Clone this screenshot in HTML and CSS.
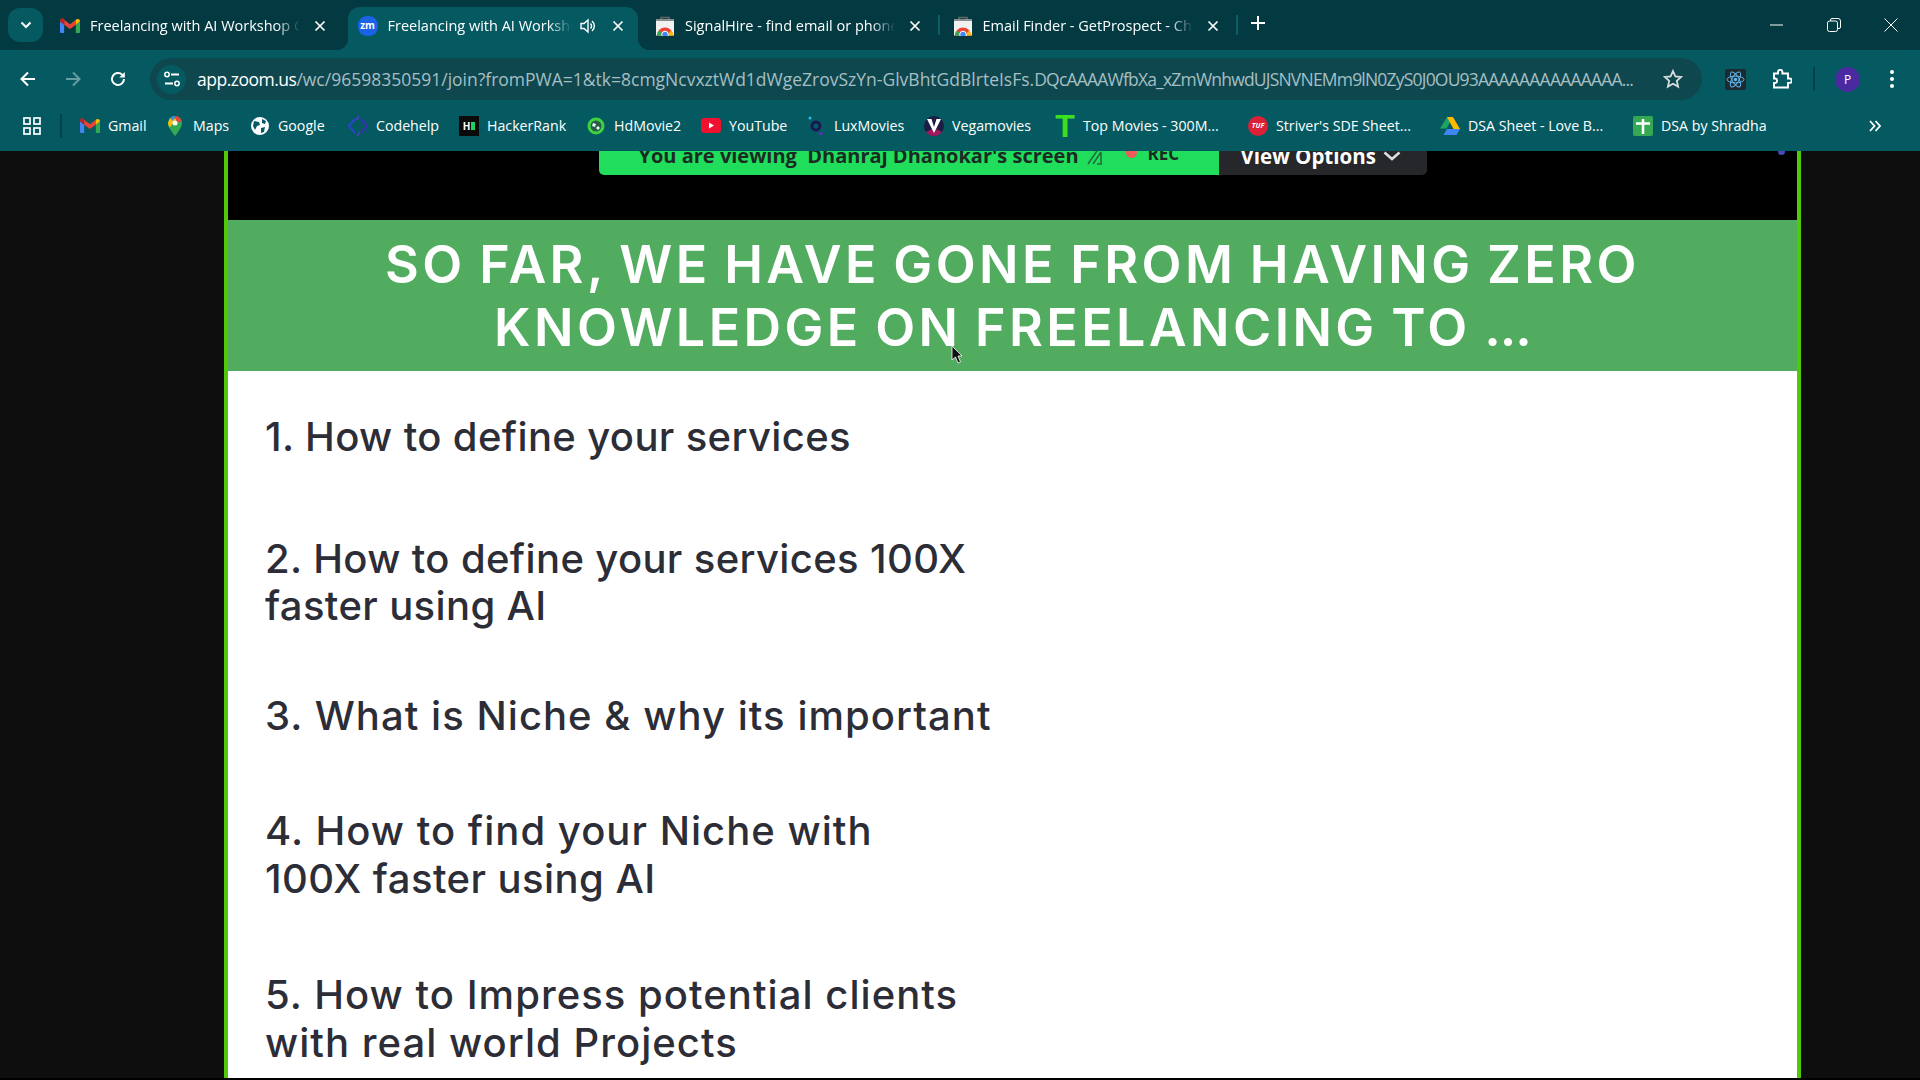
FILE: index.html
```html
<!DOCTYPE html>
<html lang="en">
<head>
    <meta charset="UTF-8">
    <title>Freelancing with AI Workshop</title>
    <link rel="stylesheet" href="styles.css">
</head>
<body>
<svg class="defs" width="0" height="0">
    <symbol id="gmail" viewBox="0 0 24 18">
        <path d="M1 18h4V8L0 4v12.500a1.500 1.500 0 0 0 1 1.500z" fill="#4285f4"/>
        <path d="M19 18h4a1.500 1.500 0 0 0 1-1.500V4l-5 4z" fill="#34a853"/>
        <path d="M5 8V2l7 5.500L19 2v6l-7 5.300z" fill="#ea4335"/>
        <path d="M0 4V3c0-2.500 3-3.500 5-2v7z" fill="#c5221f"/>
        <path d="M19 2c2-1.500 5-.5 5 2v0l-5 4z" fill="#fbbc04"/>
    </symbol>
    <symbol id="store" viewBox="0 0 20 20">
        <path d="M6 4V1.500h8V4" fill="none" stroke="#666" stroke-width="1.500"/>
        <rect x="1" y="3.500" width="18" height="16" fill="#f1f1f1"/>
        <rect x="1" y="3.500" width="18" height="1.500" fill="#8a8a8a"/>
        <path d="M2 19.500a8 8 0 0 1 16 0z" fill="#ea4335"/>
        <path d="M2 19.500a8 8 0 0 1 2.400-5.600l3.600 5.600z" fill="#34a853"/>
        <path d="M18 19.500a8 8 0 0 0-2-5.300l-4 5.300z" fill="#fbbc04"/>
        <circle cx="10" cy="18.500" r="3.300" fill="#4285f4" stroke="#fff"/>
    </symbol>
    <symbol id="close" viewBox="0 0 12 12">
        <path d="M1.500 1.500l9 9m0-9l-9 9" stroke="#fff" stroke-width="1.700" fill="none"/>
    </symbol>
</svg>

<div class="tabstrip">
    <div class="switcher">
        <svg width="12" height="8" viewBox="0 0 12 8"><path d="M1.500 1.500L6 6l4.500-4.500" stroke="#fff" stroke-width="2" fill="none"/></svg>
    </div>
    <div class="tab">
        <svg class="fav" width="20" height="15"><use href="#gmail"/></svg>
        <span class="tab-title">Freelancing with AI Workshop Company</span>
        <svg class="tab-close" width="12" height="12"><use href="#close"/></svg>
    </div>
    <div class="tab tab-active">
        <span class="zm">zm</span>
        <span class="tab-title">Freelancing with AI Workshop Zoom</span>
        <svg class="speaker" width="16" height="16" viewBox="0 0 16 16"><path d="M1 5.500h3L8 2v12L4 10.500H1z" fill="none" stroke="#fff" stroke-width="1.400"/><path d="M10.500 5.500a3.500 3.500 0 0 1 0 5M12 3a6.500 6.500 0 0 1 0 10" fill="none" stroke="#fff" stroke-width="1.400"/></svg>
        <svg class="tab-close" width="12" height="12"><use href="#close"/></svg>
    </div>
    <div class="tab tab-sep">
        <svg class="fav" width="20" height="20"><use href="#store"/></svg>
        <span class="tab-title">SignalHire - find email or phone number</span>
        <svg class="tab-close" width="12" height="12"><use href="#close"/></svg>
    </div>
    <div class="tab tab-sep">
        <svg class="fav" width="20" height="20"><use href="#store"/></svg>
        <span class="tab-title">Email Finder - GetProspect - Chrome Web</span>
        <svg class="tab-close" width="12" height="12"><use href="#close"/></svg>
    </div>
    <svg class="new-tab" width="14" height="14" viewBox="0 0 14 14"><path d="M7 0v14M0 7h14" stroke="#fff" stroke-width="2"/></svg>
    <div class="window-btns">
        <svg width="14" height="14" viewBox="0 0 14 14"><path d="M0 7h13" stroke="#fff" stroke-width="1"/></svg>
        <svg width="14" height="14" viewBox="0 0 14 14"><rect x=".5" y="3" width="10" height="10.500" rx="2" fill="none" stroke="#fff"/><path d="M3.500 3V2a1.500 1.500 0 0 1 1.500-1.500h6A2.500 2.500 0 0 1 13.500 3v6a1.500 1.500 0 0 1-1.500 1.500h-1.500" fill="none" stroke="#fff"/></svg>
        <svg width="14" height="14" viewBox="0 0 14 14"><path d="M.5.5l13 13m0-13l-13 13" stroke="#fff" stroke-width="1"/></svg>
    </div>
</div>

<div class="toolbar">
    <div class="nav-btn">
        <svg width="16" height="16" viewBox="0 0 16 16"><path d="M15 8H2M8 1.500L1.500 8 8 14.500" stroke="#fff" stroke-width="2" fill="none"/></svg>
    </div>
    <div class="nav-btn nav-off">
        <svg width="16" height="16" viewBox="0 0 16 16"><path d="M1 8h13M8 1.500L14.500 8 8 14.500" stroke="#fff" stroke-width="2" fill="none"/></svg>
    </div>
    <div class="nav-btn">
        <svg width="16" height="16" viewBox="0 0 16 16"><path d="M14 8a6 6 0 1 1-1.800-4.300L14 5.500" stroke="#fff" stroke-width="2" fill="none"/><path d="M14.800 1v5.500H9.300z" fill="#fff"/></svg>
    </div>
    <div class="omnibox">
        <span class="site-info">
            <svg width="16" height="16" viewBox="0 0 16 16"><path d="M7 3.500h8M1 12.500h8" stroke="#fff" stroke-width="1.800"/><circle cx="3" cy="3.500" r="2.200" fill="none" stroke="#fff" stroke-width="1.500"/><circle cx="13" cy="12.500" r="2.200" fill="none" stroke="#fff" stroke-width="1.500"/></svg>
        </span>
        <span class="url"><b>app.zoom.us</b>/wc/96598350591/join?fromPWA=1&amp;tk=8cmgNcvxztWd1dWgeZrovSzYn-GlvBhtGdBlrteIsFs.<span class="url-tail">DQcAAAAWfbXa_xZmWnhwdUJSNVNEMm9lN0ZyS0J0OU93AAAAAAAAAAAAAA...</span></span>
        <svg class="star" width="20" height="20" viewBox="0 0 20 20"><path d="M10 2l2.400 5.400 5.800.6-4.400 3.900 1.300 5.700L10 14.700l-5.100 2.900 1.300-5.700L1.800 8l5.800-.6z" fill="none" stroke="#d5dcdd" stroke-width="1.800"/></svg>
    </div>
    <span class="ext-react">
        <svg width="21" height="21" viewBox="0 0 21 21"><g fill="none" stroke="#61b4e8" stroke-width="1"><ellipse cx="10.500" cy="10.500" rx="8.500" ry="3.400"/><ellipse cx="10.500" cy="10.500" rx="8.500" ry="3.400" transform="rotate(60 10.500 10.500)"/><ellipse cx="10.500" cy="10.500" rx="8.500" ry="3.400" transform="rotate(120 10.500 10.500)"/></g><circle cx="10.500" cy="10.500" r="1.800" fill="#61b4e8"/></svg>
    </span>
    <svg class="ext-puzzle" width="20" height="20" viewBox="0 0 20 20"><path d="M2 5h4V3.500a2.200 2.200 0 0 1 4.400 0V5H16v5h1.500a2.200 2.200 0 0 1 0 4.400H16V19H2v-4.500h1.300a2.300 2.300 0 0 0 0-4.500H2z" fill="none" stroke="#fff" stroke-width="1.900" transform="translate(0 -.5)"/></svg>
    <span class="tool-sep"></span>
    <span class="avatar">P</span>
    <svg class="dots" width="4" height="18" viewBox="0 0 4 18"><circle cx="2" cy="2" r="2" fill="#fff"/><circle cx="2" cy="9" r="2" fill="#fff"/><circle cx="2" cy="16" r="2" fill="#fff"/></svg>
</div>

<div class="bookmarks">
    <svg class="apps" width="18" height="18" viewBox="0 0 18 18"><g fill="none" stroke="#fff" stroke-width="1.700"><rect x="1" y="1" width="6" height="6"/><rect x="11" y="1" width="6" height="6"/><rect x="1" y="11" width="6" height="6"/><rect x="11" y="11" width="6" height="6"/></g></svg>
    <span class="mark-sep"></span>
    <div class="marks">
        <div class="mark"><svg class="mark-icon" width="20" height="15"><use href="#gmail"/></svg>Gmail</div>
        <div class="mark">
            <svg class="mark-icon" width="20" height="20" viewBox="0 0 20 20"><path d="M10 0a7 7 0 0 0-7 7c0 5 7 13 7 13s7-8 7-13a7 7 0 0 0-7-7z" fill="#34a853"/><path d="M5 2L3 7c0 1.500.5 3 1.500 4.500L12 3z" fill="#fbbc04"/><path d="M10 0a7 7 0 0 0-5 2l3 3z" fill="#4285f4"/><path d="M10 0a7 7 0 0 1 6.500 5L12 7z" fill="#ea4335"/><circle cx="10" cy="7" r="2.500" fill="#fff"/></svg>Maps</div>
        <div class="mark">
            <svg class="mark-icon" width="18" height="18" viewBox="0 0 18 18"><circle cx="9" cy="9" r="9" fill="#fff"/><path d="M3 4l5 1 1 3-3 1-2 4-2-4zM11 2l4 2-1 3-3-1zM10 11l4-1-1 5-3 1z" fill="#055a62"/></svg>Google</div>
        <div class="mark">
            <svg class="mark-icon" width="20" height="20" viewBox="0 0 20 20"><path d="M7 3L1 10l6 7" fill="none" stroke="#2a46c8" stroke-width="2.200"/><path d="M13 3l6 7-6 7" fill="none" stroke="#3a30b0" stroke-width="2.200"/><path d="M11 0L8 4M9 20l3-4" stroke="#5a3ad0" stroke-width="1.500"/></svg>Codehelp</div>
        <div class="mark">
            <span class="hr-icon"><span class="hr-h">H</span><span class="hr-bar"></span></span>HackerRank</div>
        <div class="mark">
            <svg class="mark-icon" width="18" height="20" viewBox="0 0 18 20"><circle cx="9" cy="10" r="8.500" fill="#3fd43f"/><circle cx="9" cy="10" r="5.500" fill="#2a5a48"/><path d="M6 7l3 1-1 3-3-1zM11 10l2 2-2 2-2-2z" fill="#dfe"/></svg>HdMovie2</div>
        <div class="mark">
            <svg class="mark-icon" width="20" height="15" viewBox="0 0 20 15"><rect width="20" height="15" rx="3.500" fill="#f01030"/><path d="M8 4.500v6l5-3z" fill="#fff"/></svg>YouTube</div>
        <div class="mark">
            <svg class="mark-icon" width="16" height="20" viewBox="0 0 16 20"><circle cx="8" cy="10" r="4" fill="none" stroke="#1a1650" stroke-width="2.800"/><circle cx="2" cy="2" r="1.500" fill="#30b8e0"/><circle cx="13" cy="17.500" r="1.500" fill="#7a20d8"/></svg>LuxMovies</div>
        <div class="mark">
            <svg class="mark-icon" width="20" height="20" viewBox="0 0 20 20"><circle cx="10" cy="10" r="10" fill="#1c1c44"/><path d="M10 20a10 10 0 0 0 8-4l-8-4-8 4a10 10 0 0 0 8 4z" fill="#a01860"/><path d="M3 3h4.500L10 11l2.500-8H17l-7 14z" fill="#fff"/></svg>Vegamovies</div>
        <div class="mark"><span class="t-icon">T</span>Top Movies - 300M...</div>
        <div class="mark"><span class="tuf-icon">TUF</span>Striver's SDE Sheet...</div>
        <div class="mark">
            <svg class="mark-icon" width="20" height="18" viewBox="0 0 20 18"><path d="M7 0h6l-6.500 11.500H0z" fill="#1ea362"/><path d="M7 0h6l7 12h-6.500z" fill="#ffba00"/><path d="M3.500 18L7 12h13l-3.500 6z" fill="#4285f4"/></svg>DSA Sheet - Love B...</div>
        <div class="mark">
            <svg class="mark-icon" width="20" height="20" viewBox="0 0 20 20"><rect width="20" height="20" rx="2" fill="#34a853"/><path d="M3 7.500h14M10 3v15" stroke="#fff" stroke-width="2.500"/></svg>DSA by Shradha</div>
    </div>
    <svg class="more" width="12" height="12" viewBox="0 0 12 12"><path d="M1 1l4.500 5L1 11M6.500 1l4.500 5-4.500 5" fill="none" stroke="#fff" stroke-width="1.800"/></svg>
</div>

<div class="viewer">
    <div class="stage">
        <div class="stage-top">
            <div class="banner">
                <div class="banner-status">
                    <span>You are viewing&nbsp; Dhanraj Dhanokar's screen</span>
                    <svg width="16" height="18" viewBox="0 0 16 18"><path d="M1 17L12 1M6 17L14 5M14 5v12M10 17h5" stroke="#1e6a3a" stroke-width="1.500" fill="none"/></svg>
                    <i class="rec-dot"></i>
                    <span class="rec">REC</span>
                </div>
                <div class="banner-options">
                    View Options
                    <svg width="18" height="10" viewBox="0 0 18 10"><path d="M1.500 1.500L9 8l7.500-6.500" stroke="#ddd" stroke-width="2.600" fill="none"/></svg>
                </div>
            </div>
            <i class="blue-dot"></i>
        </div>
        <h1 class="slide-title">SO FAR, WE HAVE GONE FROM HAVING ZERO<br>KNOWLEDGE ON FREELANCING TO <span class="title-dots">...</span></h1>
        <div class="slide-body">
            <p class="point point-1">1. How to define your services</p>
            <p class="point point-2">2. How to define your services 100X<br>faster using AI</p>
            <p class="point point-3 point-wide">3. What is Niche &amp; why its important</p>
            <p class="point point-4 point-wide">4. How to find your Niche with<br><span class="point-line">100X faster using AI</span></p>
            <p class="point point-wide">5. How to Impress potential clients<br>with real world Projects</p>
        </div>
    </div>
    <svg class="cursor" width="13" height="19" viewBox="0 0 13 19"><path d="M1 1v14l3.500-3 2.500 6 2.500-1-2.500-6H11z" fill="#111" stroke="#fff" stroke-width=".8"/></svg>
</div>
</body>
</html>
```

FILE: styles.css
```css
*{
    box-sizing: border-box;
}

html,body{
    margin: 0;
    height: 100%;
}

body{
    width: 1920px;
    height: 1080px;
    display: flex;
    flex-direction: column;
    overflow: hidden;
    background: #035a62;
    font-family: "Open Sans", "Noto Sans", sans-serif;
    color: #fff;
}

.defs{
    position: absolute;
}

/* tabs */
.tabstrip{
    height: 50px;
    flex: none;
    display: flex;
    align-items: center;
    padding-left: 8px;
    background: #033a42;
}

.switcher{
    width: 35px;
    height: 34px;
    margin-right: 7px;
    display: flex;
    align-items: center;
    justify-content: center;
    border-radius: 12px;
    background: #055a62;
}

.tab{
    position: relative;
    width: 290px;
    height: 43px;
    margin: 7px 7.500px 0 0;
    padding: 0 14px 6px 10px;
    flex: none;
    display: flex;
    align-items: center;
    font-size: 14.500px;
}

.tab-active{
    background: #055a62;
    border-radius: 12px 12px 0 0;
}

.tab-active::before,
.tab-active::after{
    content: " ";
    position: absolute;
    bottom: 0;
    width: 12px;
    height: 12px;
}

.tab-active::before{
    left: -12px;
    background: radial-gradient(circle at 0 0, transparent 12px, #055a62 12.500px);
}

.tab-active::after{
    right: -12px;
    background: radial-gradient(circle at 100% 0, transparent 12px, #055a62 12.500px);
}

.tab-sep::after{
    content: " ";
    position: absolute;
    right: -5px;
    top: 8px;
    width: 2px;
    height: 20px;
    background: #0a5c66;
}

.fav{
    flex: none;
    margin-right: 10px;
}

.tab-title{
    flex: 1;
    min-width: 0;
    white-space: nowrap;
    overflow: hidden;
    -webkit-mask-image: linear-gradient(to left, transparent, #000 24px);
}

.tab-close{
    flex: none;
    margin-left: 14px;
}

.zm{
    width: 20px;
    height: 20px;
    margin-right: 10px;
    flex: none;
    border-radius: 45%;
    background: #1a62e8;
    font-size: 10px;
    font-weight: 700;
    line-height: 19px;
    text-align: center;
}

.speaker{
    flex: none;
    margin-left: 8px;
    margin-right: 2px;
}

.new-tab{
    margin: 0 0 4px 11px;
    flex: none;
}

.window-btns{
    margin-left: auto;
    margin-right: 22px;
    display: flex;
    gap: 43px;
}

/* address bar row */
.toolbar{
    height: 52px;
    flex: none;
    padding: 8px 26px 2px 5px;
    display: flex;
    align-items: center;
    background: #055a62;
    border-radius: 12px 12px 0 0;
}

.nav-btn{
    width: 45px;
    display: flex;
    justify-content: center;
}

.nav-off{
    opacity: 0.4;
}

.omnibox{
    width: 1552px;
    height: 42px;
    margin-left: 10px;
    padding: 0 20px 0 7px;
    flex: none;
    display: flex;
    align-items: center;
    border-radius: 21px;
    background: #0f474f;
}

.site-info{
    width: 29px;
    height: 29px;
    margin-right: 11px;
    flex: none;
    display: flex;
    align-items: center;
    justify-content: center;
    border-radius: 50%;
    background: #055a62;
}

.url{
    width: 1442px;
    flex: none;
    white-space: nowrap;
    font-size: 17.500px;
    color: #a5bfc3;
}

.url b{
    font-weight: 400;
    letter-spacing: -0.500px;
    color: #fff;
}

.url-tail{
    letter-spacing: -0.800px;
}

.star{
    flex: none;
    margin-left: 24px;
}

.ext-react{
    width: 21px;
    height: 21px;
    margin-left: 23px;
    flex: none;
    background: #1d2a30;
    border-radius: 2px;
    display: flex;
}

.ext-puzzle{
    margin-left: 26px;
    flex: none;
}

.tool-sep{
    width: 2px;
    height: 24px;
    margin-left: 21px;
    flex: none;
    background: #034048;
}

.avatar{
    width: 25px;
    height: 25px;
    margin-left: 20px;
    flex: none;
    border-radius: 50%;
    background: #4a2aa0;
    font-size: 12px;
    line-height: 25px;
    text-align: center;
}

.dots{
    margin-left: 30px;
    flex: none;
}

/* bookmarks */
.bookmarks{
    height: 49px;
    flex: none;
    padding: 0 0 2px 23px;
    display: flex;
    align-items: center;
    background: #055a62;
    font-size: 14.200px;
}

.apps{
    flex: none;
}

.mark-sep{
    width: 2px;
    height: 24px;
    margin: 0 18px 0 19px;
    flex: none;
    background: #034048;
}

.marks{
    display: grid;
    grid-template-columns: 85px 85px 98px 111px 127px 115px 105px 118px 131px 193px 192px 193px auto;
}

.mark{
    display: flex;
    align-items: center;
    white-space: nowrap;
}

.mark-icon{
    width: 20px;
    margin-right: 8px;
    flex: none;
}

.hr-icon{
    width: 20px;
    height: 20px;
    margin-right: 8px;
    flex: none;
    display: flex;
    align-items: center;
    justify-content: center;
    gap: 1px;
    background: #0a0a0a;
}

.hr-h{
    font-size: 10px;
    font-weight: 700;
    line-height: 10px;
}

.hr-bar{
    width: 4px;
    height: 8px;
    background: #20d060;
}

.t-icon{
    width: 20px;
    height: 20px;
    margin-right: 8px;
    flex: none;
    font-family: "Liberation Sans", sans-serif;
    font-size: 32px;
    font-weight: 700;
    line-height: 20px;
    text-align: center;
    color: #3de01f;
}

.tuf-icon{
    width: 20px;
    height: 20px;
    margin-right: 8px;
    flex: none;
    border-radius: 50%;
    background: #dc2036;
    font-size: 7px;
    font-style: italic;
    font-weight: 700;
    line-height: 20px;
    text-align: center;
}

.more{
    margin-left: auto;
    margin-right: 39px;
    flex: none;
}

/* zoom page */
.viewer{
    position: relative;
    flex: 1;
    min-height: 0;
    padding: 0 119px 0 224px;
    background: #0e0e0e;
    border-bottom: 2px solid #000;
    overflow: hidden;
}

.stage{
    height: 100%;
    display: flex;
    flex-direction: column;
    border: solid #52c80a;
    border-width: 0 4px;
    background: #fff;
    overflow: hidden;
}

.stage-top{
    position: relative;
    height: 69px;
    padding-bottom: 45px;
    flex: none;
    display: flex;
    align-items: flex-end;
    justify-content: center;
    background: #000;
}

.banner{
    width: 828px;
    height: 44px;
    flex: none;
    display: flex;
    border-radius: 0 0 5px 5px;
    overflow: hidden;
    font-weight: 700;
}

.banner-status{
    width: 620px;
    padding: 5px 0 0 40px;
    display: flex;
    align-items: center;
    background: #20dd5c;
    font-size: 20px;
    color: #1c2a24;
    white-space: nowrap;
}

.banner-status svg{
    margin-left: 8px;
    flex: none;
}

.rec-dot{
    width: 11px;
    height: 11px;
    margin: 0 11px 6px 23px;
    flex: none;
    border-radius: 50%;
    background: #f05c5c;
}

.rec{
    margin-bottom: 4px;
    font-size: 17px;
}

.banner-options{
    flex: 1;
    padding: 5px 0 0 22px;
    display: flex;
    align-items: center;
    gap: 7px;
    background: #26272a;
    font-size: 20.500px;
    white-space: nowrap;
}

.blue-dot{
    position: absolute;
    right: 12px;
    top: -3px;
    width: 7px;
    height: 7px;
    border-radius: 50%;
    background: #4a4ac0;
}

.slide-title{
    height: 151px;
    margin: 0;
    padding-top: 13px;
    flex: none;
    background: #52ac60;
    font-family: Inter, sans-serif;
    font-size: 52px;
    font-weight: 600;
    line-height: 63px;
    letter-spacing: 3.400px;
    word-spacing: -3px;
    text-align: center;
    color: #fff;
}

.title-dots{
    letter-spacing: -1px;
}

.slide-body{
    flex: 1;
    padding: 42px 0 0 37px;
    background: #fff;
}

.point{
    margin: 0;
    font-family: Inter, sans-serif;
    font-size: 40px;
    font-weight: 500;
    line-height: 47.500px;
    letter-spacing: 0.370px;
    color: #2c2d36;
}

.point-wide{
    letter-spacing: 1.040px;
}

.point-line{
    letter-spacing: 0.450px;
}

.point-1{
    margin-bottom: 74px;
}

.point-2{
    margin-bottom: 62px;
}

.point-3{
    margin-bottom: 68px;
}

.point-4{
    margin-bottom: 69px;
}

.cursor{
    position: absolute;
    left: 951px;
    top: 194px;
}
```
